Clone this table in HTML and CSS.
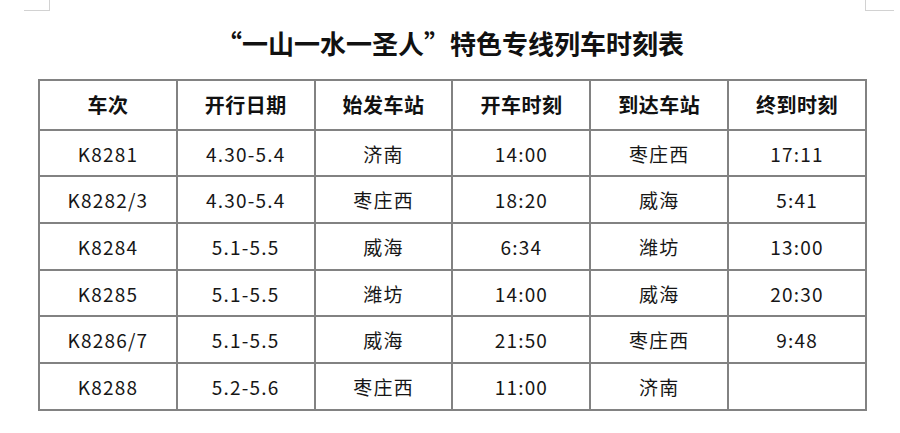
FILE: index.html
```html
<!DOCTYPE html>
<html lang="zh-CN">
<head>
<meta charset="utf-8">
<title>“一山一水一圣人”特色专线列车时刻表</title>
<link rel="stylesheet" href="styles.css">
</head>
<body>
<div class="page">
  <span class="mark mark-tl"></span>
  <span class="mark mark-tr"></span>
  <h1 class="title">“一山一水一圣人”特色专线列车时刻表</h1>
  <table class="timetable">
    <thead>
      <tr><th>车次</th><th>开行日期</th><th>始发车站</th><th>开车时刻</th><th>到达车站</th><th>终到时刻</th></tr>
    </thead>
    <tbody>
      <tr class="r46"><td>K8281</td><td>4.30-5.4</td><td>济南</td><td>14:00</td><td>枣庄西</td><td>17:11</td></tr>
      <tr class="r47"><td>K8282/3</td><td>4.30-5.4</td><td>枣庄西</td><td>18:20</td><td>威海</td><td>5:41</td></tr>
      <tr class="r47"><td>K8284</td><td>5.1-5.5</td><td>威海</td><td>6:34</td><td>潍坊</td><td>13:00</td></tr>
      <tr class="r46"><td>K8285</td><td>5.1-5.5</td><td>潍坊</td><td>14:00</td><td>威海</td><td>20:30</td></tr>
      <tr class="r47"><td>K8286/7</td><td>5.1-5.5</td><td>威海</td><td>21:50</td><td>枣庄西</td><td>9:48</td></tr>
      <tr class="r47"><td>K8288</td><td>5.2-5.6</td><td>枣庄西</td><td>11:00</td><td>济南</td><td></td></tr>
    </tbody>
  </table>
</div>
</body>
</html>
```

FILE: styles.css
```css
html, body {
  margin: 0;
  padding: 0;
  background: #ffffff;
}
.page {
  position: relative;
  width: 900px;
  height: 433px;
  overflow: hidden;
  font-family: "Noto Sans CJK SC", "Noto Sans", sans-serif;
  color: #161616;
}
.mark {
  position: absolute;
  top: 0;
  width: 25px;
  height: 10px;
  border-bottom: 1px solid #d2d2d2;
}
.mark-tl {
  left: 24px;
  border-right: 1px solid #d2d2d2;
}
.mark-tr {
  left: 865px;
  border-left: 1px solid #d2d2d2;
  width: 28px;
}
.title {
  margin: 0;
  height: 79px;
  box-sizing: border-box;
  display: flex;
  align-items: center;
  justify-content: center;
  font-size: 26px;
  font-weight: 700;
  line-height: 1;
  padding-top: 7px;
  color: #111;
}
.timetable {
  margin-left: 38px;
  width: 829px;
  border-collapse: collapse;
  table-layout: fixed;
}
.timetable th,
.timetable td {
  border: 2px solid #828282;
  padding: 0;
  text-align: center;
  vertical-align: middle;
  line-height: 1;
}
.timetable th {
  height: 48px;
  font-size: 20px;
  font-weight: 700;
  letter-spacing: 0.5px;
  color: #111;
}
.timetable td {
  font-size: 19px;
  font-weight: 400;
  letter-spacing: 1.2px;
}
.r46 td { height: 44px; }
.r47 td { height: 45px; }
```
